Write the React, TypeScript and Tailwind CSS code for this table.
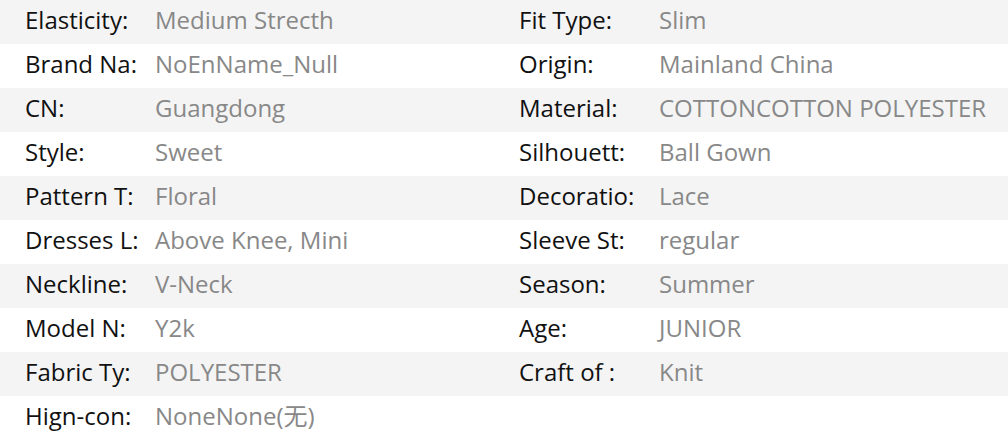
import React from "react";

const rows: [string, string, string?, string?][] = [
  ["Elasticity:", "Medium Strecth", "Fit Type:", "Slim"],
  ["Brand Na:", "NoEnName_Null", "Origin:", "Mainland China"],
  ["CN:", "Guangdong", "Material:", "COTTONCOTTON POLYESTER"],
  ["Style:", "Sweet", "Silhouett:", "Ball Gown"],
  ["Pattern T:", "Floral", "Decoratio:", "Lace"],
  ["Dresses L:", "Above Knee, Mini", "Sleeve St:", "regular"],
  ["Neckline:", "V-Neck", "Season:", "Summer"],
  ["Model N:", "Y2k", "Age:", "JUNIOR"],
  ["Fabric Ty:", "POLYESTER", "Craft of :", "Knit"],
  ["Hign-con:", "NoneNone(无)"],
];

export default function App() {
  return (
    <div
      className="w-[1008px] h-[440px] overflow-hidden bg-white text-[24px] leading-[40px]"
      style={{ fontFamily: '"Open Sans", "Noto Sans CJK SC", sans-serif' }}
    >
      {rows.map((r, i) => (
        <div
          key={i}
          className={`flex h-[44px] pl-[25px] whitespace-nowrap ${i % 2 === 0 ? "bg-[#f4f4f4]" : "bg-white"}`}
        >
          <div className="w-[130px] shrink-0 text-[#111]">{r[0]}</div>
          <div className="w-[364px] shrink-0 text-[#888]">{r[1]}</div>
          {r[2] && <div className="w-[140px] shrink-0 text-[#111]">{r[2]}</div>}
          {r[3] && <div className="shrink-0 text-[#888]">{r[3]}</div>}
        </div>
      ))}
    </div>
  );
}
